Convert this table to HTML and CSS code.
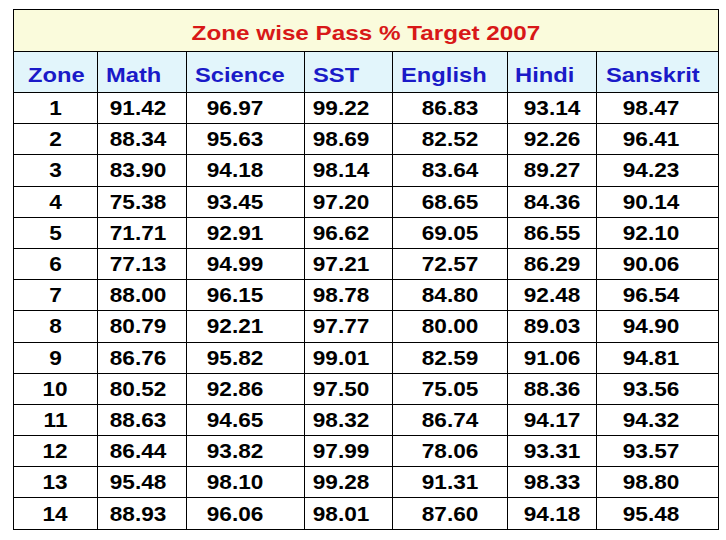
FILE: index.html
```html
<!DOCTYPE html>
<html>
<head>
<meta charset="utf-8">
<title>Zone wise Pass % Target 2007</title>
<link rel="stylesheet" href="styles.css">
</head>
<body>
<div class="sheet">
<table class="grid">
<colgroup>
<col class="c-zone"><col class="c-math"><col class="c-sci"><col class="c-sst"><col class="c-eng"><col class="c-hin"><col class="c-san">
</colgroup>
<tr class="title-row"><td colspan="7"><span class="s">Zone wise Pass % Target 2007</span></td></tr>
<tr class="head-row">
<td class="h-zone"><span class="s">Zone</span></td>
<td><span class="s">Math</span></td>
<td><span class="s">Science</span></td>
<td><span class="s">SST</span></td>
<td><span class="s">English</span></td>
<td class="h-hin"><span class="s">Hindi</span></td>
<td class="h-san"><span class="s">Sanskrit</span></td>
</tr>
<tr class="row"><td><span class="s">1</span></td><td><span class="s">91.42</span></td><td><span class="s">96.97</span></td><td><span class="s">99.22</span></td><td><span class="s">86.83</span></td><td><span class="s">93.14</span></td><td><span class="s">98.47</span></td></tr>
<tr class="row"><td><span class="s">2</span></td><td><span class="s">88.34</span></td><td><span class="s">95.63</span></td><td><span class="s">98.69</span></td><td><span class="s">82.52</span></td><td><span class="s">92.26</span></td><td><span class="s">96.41</span></td></tr>
<tr class="row"><td><span class="s">3</span></td><td><span class="s">83.90</span></td><td><span class="s">94.18</span></td><td><span class="s">98.14</span></td><td><span class="s">83.64</span></td><td><span class="s">89.27</span></td><td><span class="s">94.23</span></td></tr>
<tr class="row"><td><span class="s">4</span></td><td><span class="s">75.38</span></td><td><span class="s">93.45</span></td><td><span class="s">97.20</span></td><td><span class="s">68.65</span></td><td><span class="s">84.36</span></td><td><span class="s">90.14</span></td></tr>
<tr class="row"><td><span class="s">5</span></td><td><span class="s">71.71</span></td><td><span class="s">92.91</span></td><td><span class="s">96.62</span></td><td><span class="s">69.05</span></td><td><span class="s">86.55</span></td><td><span class="s">92.10</span></td></tr>
<tr class="row"><td><span class="s">6</span></td><td><span class="s">77.13</span></td><td><span class="s">94.99</span></td><td><span class="s">97.21</span></td><td><span class="s">72.57</span></td><td><span class="s">86.29</span></td><td><span class="s">90.06</span></td></tr>
<tr class="row"><td><span class="s">7</span></td><td><span class="s">88.00</span></td><td><span class="s">96.15</span></td><td><span class="s">98.78</span></td><td><span class="s">84.80</span></td><td><span class="s">92.48</span></td><td><span class="s">96.54</span></td></tr>
<tr class="row"><td><span class="s">8</span></td><td><span class="s">80.79</span></td><td><span class="s">92.21</span></td><td><span class="s">97.77</span></td><td><span class="s">80.00</span></td><td><span class="s">89.03</span></td><td><span class="s">94.90</span></td></tr>
<tr class="row"><td><span class="s">9</span></td><td><span class="s">86.76</span></td><td><span class="s">95.82</span></td><td><span class="s">99.01</span></td><td><span class="s">82.59</span></td><td><span class="s">91.06</span></td><td><span class="s">94.81</span></td></tr>
<tr class="row"><td><span class="s">10</span></td><td><span class="s">80.52</span></td><td><span class="s">92.86</span></td><td><span class="s">97.50</span></td><td><span class="s">75.05</span></td><td><span class="s">88.36</span></td><td><span class="s">93.56</span></td></tr>
<tr class="row"><td><span class="s">11</span></td><td><span class="s">88.63</span></td><td><span class="s">94.65</span></td><td><span class="s">98.32</span></td><td><span class="s">86.74</span></td><td><span class="s">94.17</span></td><td><span class="s">94.32</span></td></tr>
<tr class="row"><td><span class="s">12</span></td><td><span class="s">86.44</span></td><td><span class="s">93.82</span></td><td><span class="s">97.99</span></td><td><span class="s">78.06</span></td><td><span class="s">93.31</span></td><td><span class="s">93.57</span></td></tr>
<tr class="row"><td><span class="s">13</span></td><td><span class="s">95.48</span></td><td><span class="s">98.10</span></td><td><span class="s">99.28</span></td><td><span class="s">91.31</span></td><td><span class="s">98.33</span></td><td><span class="s">98.80</span></td></tr>
<tr class="row"><td><span class="s">14</span></td><td><span class="s">88.93</span></td><td><span class="s">96.06</span></td><td><span class="s">98.01</span></td><td><span class="s">87.60</span></td><td><span class="s">94.18</span></td><td><span class="s">95.48</span></td></tr>
</table>
</div>
</body>
</html>
```

FILE: styles.css
```css
html, body {
  margin: 0;
  padding: 0;
  background: #ffffff;
}

.sheet {
  padding: 9px 0 0 13px;
}

.grid {
  border-collapse: collapse;
  table-layout: fixed;
  width: 705px;
  font-family: "Liberation Sans", Arial, sans-serif;
  font-weight: bold;
}

.c-zone { width: 84px; }
.c-math { width: 89px; }
.c-sci  { width: 118px; }
.c-sst  { width: 88px; }
.c-eng  { width: 115px; }
.c-hin  { width: 89px; }
.c-san  { width: 122px; }

.grid td {
  border: 1px solid #000000;
  padding: 0;
  vertical-align: middle;
  white-space: nowrap;
}

.s {
  display: inline-block;
  transform: scaleX(1.13);
  transform-origin: center;
}

.title-row td {
  height: 42px;
  background: #fafbdc;
  color: #d81818;
  font-size: 21px;
  text-align: center;
  padding-top: 4px;
  box-sizing: border-box;
}

.title-row .s {
  transform: scaleX(1.155);
}

.head-row td {
  height: 41px;
  background: #e2f5fb;
  color: #1a1ac8;
  font-size: 21px;
  text-align: left;
  padding: 5px 0 0 8px;
  box-sizing: border-box;
}

.head-row .s {
  transform-origin: left center;
}

.head-row .h-zone { padding-left: 14px; }
.head-row .h-hin { padding-left: 7px; }
.head-row .h-san { padding-left: 9px; }

.row td {
  height: 31.2px;
  color: #000000;
  font-size: 20px;
  text-align: center;
  padding-top: 1px;
  box-sizing: border-box;
}

.row td:nth-child(2) { padding-right: 8px; }
.row td:nth-child(3) { padding-right: 20px; }
.row td:nth-child(4) { padding-right: 14px; }
.row td:nth-child(7) { padding-right: 14px; }
```
